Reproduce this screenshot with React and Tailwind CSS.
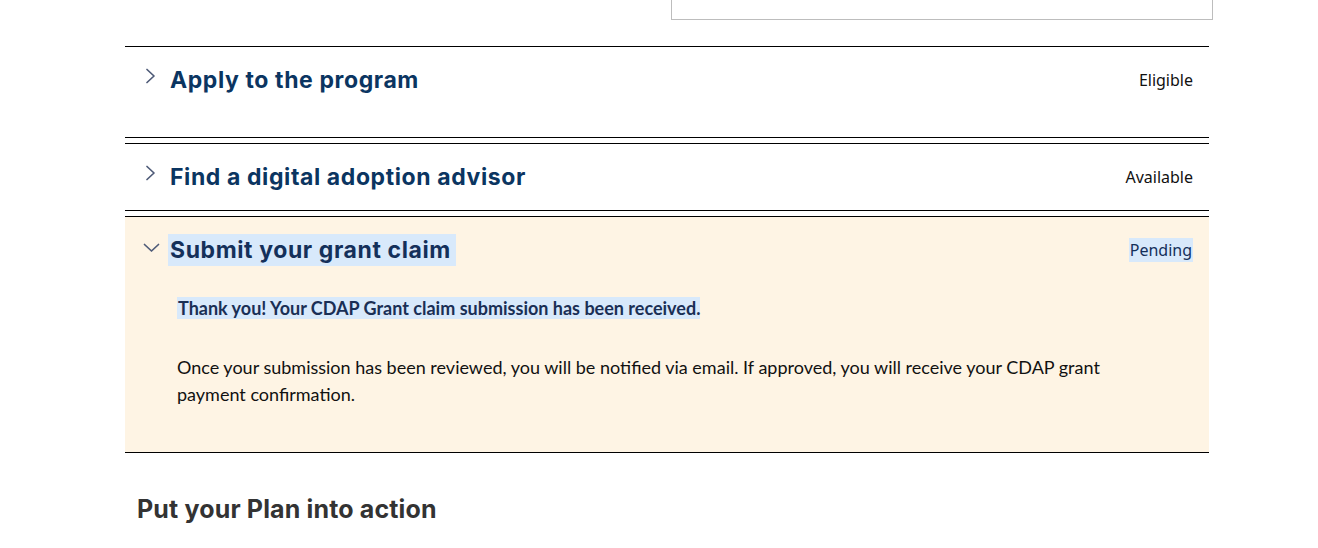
const titleFont = { fontFamily: 'Inter, "Noto Sans", sans-serif' };

const Chevron = ({ open }) =>
  open ? (
    <svg width="17" height="10" viewBox="0 0 17 10" className="mt-[-4px]" fill="none" stroke="#4f5b78" strokeWidth="1.7" strokeLinecap="round" strokeLinejoin="round">
      <polyline points="1.5,1.5 8.5,8 15.5,1.5" />
    </svg>
  ) : (
    <svg width="11" height="16" viewBox="0 0 11 16" className="mt-[-8px]" fill="none" stroke="#4f5b78" strokeWidth="1.7" strokeLinecap="round" strokeLinejoin="round">
      <polyline points="2,1.5 9,8 2,14.5" />
    </svg>
  );

const Item = ({ title, status, open, tall, children }) => (
  <div className={`border-y border-black ${open ? 'bg-[#fef4e4]' : 'bg-white'}`}>
    <div className="flex items-center justify-between pl-[18px] pr-[16px] h-[66px]">
      <div className="flex items-center">
        <div className={`flex justify-center ${open ? 'w-[17px] mr-[10px]' : 'w-[11px] ml-[2px] mr-[14px]'}`}>
          <Chevron open={open} />
        </div>
        <h3
          className={`text-[23px] font-bold tracking-[0.6px] leading-[32px] pl-[2px] -ml-[2px] ${open ? 'bg-[#d8e9fb] text-[#14305a] pr-[5px]' : 'text-[#0b3561]'}`}
          style={titleFont}
        >
          {title}
        </h3>
      </div>
      <span
        className={`text-[16px] leading-[24px] ${open ? 'bg-[#d8e9fb] text-[#14305a] px-[1px]' : 'text-[#111]'}`}
        style={{ fontFamily: '"Noto Sans", "Open Sans", sans-serif' }}
      >
        {status}
      </span>
    </div>
    {tall && <div className="h-[24px]" />}
    {children}
  </div>
);

export default function App() {
  return (
    <div className="bg-white w-[1318px] h-[548px] overflow-hidden" style={{ fontFamily: 'Lato, sans-serif' }}>
      <div className="w-[1084px] ml-[125px]">
        <div className="flex justify-end -mr-[4px]">
          <div className="w-[542px] h-[20px] border border-t-0 border-[#bdbdbd]" />
        </div>
        <div className="mt-[26px] flex flex-col gap-[5px]">
          <Item title="Apply to the program" status="Eligible" tall />
          <Item title="Find a digital adoption advisor" status="Available" />
          <Item title="Submit your grant claim" status="Pending" open>
            <div className="pl-[52px] pr-[60px] pt-[14px] pb-[44px]">
              <p className="text-[18px] font-bold text-[#1a2f55] leading-[23px]">
                <span className="bg-[#d8e9fb] pl-[1px]">Thank you! Your CDAP Grant claim submission has been received.</span>
              </p>
              <p className="mt-[34px] text-[18px] text-[#111] leading-[27px] max-w-[950px]">
                Once your submission has been reviewed, you will be notified via email. If approved, you will receive your CDAP grant payment confirmation.
              </p>
            </div>
          </Item>
        </div>
        <h2
          className="mt-[40px] ml-[12px] text-[25px] font-bold text-[#333] tracking-[0.15px] leading-[32px]"
          style={titleFont}
        >
          Put your Plan into action
        </h2>
      </div>
    </div>
  );
}
